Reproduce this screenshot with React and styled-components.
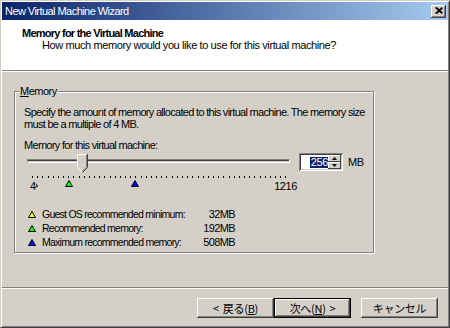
import React from "react";
import styled, { createGlobalStyle, css } from "styled-components";

const Global = createGlobalStyle`
  *, *::before, *::after { box-sizing: border-box; }
  html, body { margin: 0; padding: 0; background: #ffffff; }
  body { font-family: "Liberation Sans", Arial, sans-serif; }
`;

const Window = styled.div`
  width: 450px;
  height: 328px;
  background: #d4d0c8;
  border: 1px solid;
  border-color: #d4d0c8 #404040 #404040 #d4d0c8;
  box-shadow: inset 1px 1px #ffffff, inset -1px -1px #808080;
  padding: 1px;
  display: flex;
  flex-direction: column;
  font-family: "Liberation Sans", Arial, sans-serif;
  font-size: 11px;
  letter-spacing: -0.7px;
  color: #000;
`;

const TitleBar = styled.div`
  flex: none;
  height: 18px;
  display: flex;
  align-items: center;
  justify-content: space-between;
  padding: 0 2px 0 2px;
  background: linear-gradient(to right, #0a246a, #a6caf0);
  color: #ffffff;
`;

const TitleText = styled.span`
  padding-left: 1px;
  line-height: 12px;
  letter-spacing: -0.55px;
`;

const CloseButton = styled.div`
  width: 15px;
  height: 13px;
  display: flex;
  align-items: center;
  justify-content: center;
  background: #d4d0c8;
  box-shadow: inset -1px -1px #404040, inset 1px 1px #ffffff,
    inset -2px -2px #808080, inset 2px 2px #d4d0c8;
  padding-bottom: 1px;
`;

const Header = styled.div`
  flex: none;
  height: 51px;
  background: #ffffff;
  border-bottom: 1px solid #808080;
  padding: 7px 0 0 20px;
`;

const Heading = styled.div`
  font-weight: bold;
  line-height: 12px;
  letter-spacing: -0.75px;
`;

const SubHeading = styled.div`
  line-height: 12px;
  padding-left: 20px;
  letter-spacing: -0.4px;
`;

const Body = styled.div`
  flex: 1;
  border-top: 1px solid #ffffff;
  padding: 13px 0 0 12px;
`;

const GroupBox = styled.fieldset`
  width: 360px;
  margin: 0;
  min-width: 0;
  padding: 9px 2px 3px 9px;
  border: 1px solid #808080;
  box-shadow: 1px 1px 0 #ffffff, inset 1px 1px 0 #ffffff;
`;

const GroupLegend = styled.legend`
  padding: 0 1px;
  margin-left: -5px;
  line-height: 12px;
  background: #d4d0c8;
  letter-spacing: -0.5px;
`;

const Text = styled.div`
  line-height: 12px;
  white-space: nowrap;
  margin-top: ${(p) => p.$mt || 0}px;
`;

const SliderRow = styled.div`
  display: flex;
  align-items: flex-start;
  margin-top: 1px;
`;

const Slider = styled.div`
  flex: none;
  width: 263px;
  margin-left: 3px;
`;

const Channel = styled.div`
  position: relative;
  height: 22px;
`;

const Track = styled.div`
  position: absolute;
  left: 0;
  right: 0;
  top: 7px;
  height: 4px;
  border-top: 1px solid #808080;
  border-left: 1px solid #808080;
  border-bottom: 1px solid #ffffff;
  border-right: 1px solid #ffffff;
  box-shadow: inset 0 1px #404040;
`;

const Thumb = styled.svg`
  position: absolute;
  top: 2px;
  display: block;
`;

const TickRow = styled.div`
  display: flex;
  justify-content: space-between;
  width: 255px;
  height: 2px;
  margin: 2px 0 0 5px;
`;

const Tick = styled.span`
  width: 1px;
  height: 2px;
  background: #000;
`;

const Scale = styled.div`
  position: relative;
  height: 12px;
  margin-top: 2px;
`;

const Marker = styled.span`
  position: absolute;
  top: 0;
  display: block;
`;

const ScaleLabel = styled.span`
  position: absolute;
  top: 0;
  line-height: 12px;
  background: #d4d0c8;
  letter-spacing: -0.4px;
  ${(p) =>
    p.$right
      ? css`
          right: -7px;
        `
      : css`
          left: 3px;
        `}
`;

const SpinBox = styled.div`
  flex: none;
  display: flex;
  width: 44px;
  height: 18px;
  margin: 1px 0 0 9px;
  padding: 2px;
  background: #ffffff;
  box-shadow: inset 1px 1px #808080, inset -1px -1px #ffffff,
    inset 2px 2px #404040, inset -2px -2px #d4d0c8;
`;

const SpinField = styled.div`
  flex: 1;
  display: flex;
  justify-content: flex-end;
  align-items: center;
`;

const Selected = styled.span`
  background: #0a246a;
  color: #ffffff;
  line-height: 11px;
  padding: 0 0 0 1px;
  letter-spacing: -0.4px;
`;

const SpinButtons = styled.div`
  width: 13px;
  display: flex;
  flex-direction: column;
`;

const SpinButton = styled.div`
  flex: 1;
  display: flex;
  align-items: center;
  justify-content: center;
  background: #d4d0c8;
  box-shadow: inset -1px -1px #404040, inset 1px 1px #ffffff;
`;

const Unit = styled.span`
  margin: 4px 0 0 5px;
  line-height: 12px;
  letter-spacing: -0.4px;
`;

const LegendGrid = styled.div`
  display: grid;
  grid-template-columns: 8px 1fr auto;
  grid-auto-rows: 14px;
  column-gap: 6px;
  align-items: center;
  width: 207px;
  margin: 15px 0 0 4px;
  white-space: nowrap;
`;

const Value = styled.span`
  text-align: right;
  line-height: 12px;
  letter-spacing: -0.6px;
`;

const Label = styled.span`
  line-height: 12px;
  font-size: 10.5px;
  letter-spacing: -0.75px;
`;

const Footer = styled.div`
  flex: none;
  height: 39px;
  border-top: 1px solid #808080;
  box-shadow: inset 0 1px #ffffff;
  display: flex;
  justify-content: flex-end;
  align-items: flex-start;
  padding: 10px 10px 0 0;
`;

const Button = styled.button`
  width: 77px;
  height: 20px;
  margin: 0 0 0 ${(p) => p.$gap || 0}px;
  padding: 0;
  border: 1px solid transparent;
  background: #d4d0c8;
  box-shadow: inset -1px -1px #404040, inset 1px 1px #ffffff,
    inset -2px -2px #808080, inset 2px 2px #d4d0c8;
  font-family: "Noto Sans CJK JP", "Liberation Sans", sans-serif;
  font-size: 11px;
  letter-spacing: -0.3px;
  white-space: nowrap;
  color: #000;
  line-height: 12px;
  ${(p) =>
    p.$default
      ? css`
          border-color: #000;
        `
      : css`
          border: none;
        `}
`;

const Arrow = styled.span`
  margin: ${(p) => (p.$after ? "0 0 0 4px" : "0 4px 0 0")};
`;

const MIN = 4;
const MAX = 1216;
const WIDTH = 254;
const pos = (v) => 2.5 + ((v - MIN) / (MAX - MIN)) * WIDTH;

const Triangle = ({ color, ...rest }) => (
  <svg width="8" height="7" viewBox="0 0 8 7" style={{ display: "block" }} {...rest}>
    <polygon points="0.5,6.5 4,0.5 7.5,6.5" fill={color} stroke="#000" strokeWidth="1" />
  </svg>
);

const ThumbShape = (props) => (
  <Thumb width="11" height="19" viewBox="0 0 11 19" {...props}>
    <polygon points="0,0 11,0 11,13 5.5,18.5 0,13" fill="#d4d0c8" />
    <polyline points="0.5,13.5 0.5,0.5 10,0.5" fill="none" stroke="#ffffff" />
    <line x1="0.5" y1="13.5" x2="5" y2="18" stroke="#ffffff" />
    <polyline points="10.5,0 10.5,13.5 5.5,18.5" fill="none" stroke="#404040" />
    <polyline points="9.5,1 9.5,13 5.2,17.3" fill="none" stroke="#808080" />
  </Thumb>
);

const markers = [
  { v: 32, color: "#ffff00", x: 7 },
  { v: 192, color: "#00ff00", x: 42 },
  { v: 508, color: "#0000ff", x: 108 },
];

const legend = [
  { color: "#ffff00", label: "Guest OS recommended minimum:", value: "32MB" },
  { color: "#00ff00", label: "Recommended memory:", value: "192MB" },
  { color: "#0000ff", label: "Maximum recommended memory:", value: "508MB" },
];

export default function App() {
  const value = 256;
  return (
    <>
      <Global />
      <Window>
        <TitleBar>
          <TitleText>New Virtual Machine Wizard</TitleText>
          <CloseButton>
            <svg width="8" height="7" viewBox="0 0 8 7">
              <path d="M0.5 0.5 L7 6.5 M1.5 0.5 L7.5 6 M7 0.5 L0.5 6.5 M7.5 1 L1.5 6.5" stroke="#000" strokeWidth="1.1" />
            </svg>
          </CloseButton>
        </TitleBar>
        <Header>
          <Heading>Memory for the Virtual Machine</Heading>
          <SubHeading>How much memory would you like to use for this virtual machine?</SubHeading>
        </Header>
        <Body>
          <GroupBox>
            <GroupLegend>
              <u>M</u>emory
            </GroupLegend>
            <Text>Specify the amount of memory allocated to this virtual machine. The memory size</Text>
            <Text>must be a multiple of 4 MB.</Text>
            <Text $mt={9}>Memory for this virtual machine:</Text>
            <SliderRow>
              <Slider>
                <Channel>
                  <Track />
                  <ThumbShape style={{ left: `${pos(value) - 5.5}px` }} />
                </Channel>
                <TickRow>
                  {Array.from({ length: 50 }, (_, i) => (
                    <Tick key={i} />
                  ))}
                </TickRow>
                <Scale>
                  {markers.map((m) => (
                    <Marker key={m.v} style={{ left: `${m.x - 4}px` }}>
                      <Triangle color={m.color} />
                    </Marker>
                  ))}
                  <ScaleLabel>4</ScaleLabel>
                  <ScaleLabel $right>1216</ScaleLabel>
                </Scale>
              </Slider>
              <SpinBox>
                <SpinField>
                  <Selected>256</Selected>
                </SpinField>
                <SpinButtons>
                  <SpinButton>
                    <svg width="5" height="3" viewBox="0 0 5 3">
                      <polygon points="2.5,0 5,3 0,3" fill="#000" />
                    </svg>
                  </SpinButton>
                  <SpinButton>
                    <svg width="5" height="3" viewBox="0 0 5 3">
                      <polygon points="0,0 5,0 2.5,3" fill="#000" />
                    </svg>
                  </SpinButton>
                </SpinButtons>
              </SpinBox>
              <Unit>MB</Unit>
            </SliderRow>
            <LegendGrid>
              {legend.map((l) => (
                <React.Fragment key={l.label}>
                  <Triangle color={l.color} />
                  <Label>{l.label}</Label>
                  <Value>{l.value}</Value>
                </React.Fragment>
              ))}
            </LegendGrid>
          </GroupBox>
        </Body>
        <Footer>
          <Button>
            <Arrow>&lt;</Arrow>
            {"戻る("}
            <u>B</u>
            {")"}
          </Button>
          <Button $default>
            {"次へ("}
            <u>N</u>
            {")"}
            <Arrow $after>&gt;</Arrow>
          </Button>
          <Button $gap={10}>キャンセル</Button>
        </Footer>
      </Window>
    </>
  );
}
